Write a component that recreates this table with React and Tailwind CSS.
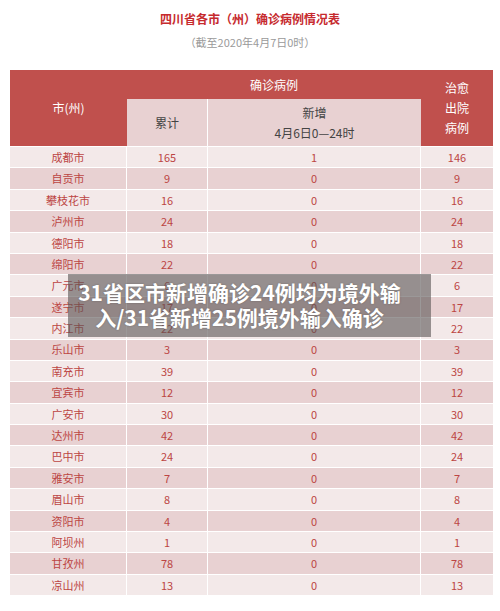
import React from 'react';

const rows = [
  ['成都市', 165, 1, 146],
  ['自贡市', 9, 0, 9],
  ['攀枝花市', 16, 0, 16],
  ['泸州市', 24, 0, 24],
  ['德阳市', 18, 0, 18],
  ['绵阳市', 22, 0, 22],
  ['广元市', 6, 0, 6],
  ['遂宁市', 17, 0, 17],
  ['内江市', 22, 0, 22],
  ['乐山市', 3, 0, 3],
  ['南充市', 39, 0, 39],
  ['宜宾市', 12, 0, 12],
  ['广安市', 30, 0, 30],
  ['达州市', 42, 0, 42],
  ['巴中市', 24, 0, 24],
  ['雅安市', 7, 0, 7],
  ['眉山市', 8, 0, 8],
  ['资阳市', 4, 0, 4],
  ['阿坝州', 1, 0, 1],
  ['甘孜州', 78, 0, 78],
  ['凉山州', 13, 0, 13],
];

const font = "font-['Noto_Sans_CJK_SC','Noto_Sans',sans-serif]";

export default function App() {
  return (
    <div className={`relative w-[500px] h-[611px] overflow-hidden bg-white ${font}`}>
      {/* Title */}
      <div className="pt-[11px] text-center">
        <p className="text-[12px] leading-4 font-bold text-[#c62a2e]">四川省各市（州）确诊病例情况表</p>
        <p className="mt-[7px] text-[11px] leading-4 text-[#9a9a9a]">（截至2020年4月7日0时）</p>
      </div>

      {/* Table */}
      <div className="mt-[20px] ml-[10px] w-[483px]">
        <div className="grid grid-cols-[117px_81px_213px_72px] grid-rows-[29px_47px] bg-[#c0504d] text-[12px]">
          <div className="row-span-2 flex items-center justify-center text-white">市(州)</div>
          <div className="col-span-2 flex items-center justify-center text-white">确诊病例</div>
          <div className="row-span-2 flex flex-col items-center justify-center leading-[20px] text-white">
            <span>治愈</span>
            <span>出院</span>
            <span>病例</span>
          </div>
          <div className="flex items-center justify-center border-r border-white bg-[#e8d1d2] text-[#444]">累计</div>
          <div className="flex flex-col items-center justify-center leading-[20px] bg-[#e8d1d2] text-[#444]">
            <span>新增</span>
            <span>4月6日0—24时</span>
          </div>
        </div>
        {rows.map(([name, total, add, cured], i) => (
          <div
            key={name}
            className={`grid h-[21.4px] grid-cols-[117px_81px_213px_72px] border-t border-white text-[11px] text-[#bc4543] ${i % 2 === 0 ? 'bg-[#f3e9e9]' : 'bg-[#e8d1d2]'}`}
          >
            <div className="flex items-center justify-center border-r border-white">{name}</div>
            <div className="flex items-center justify-center border-r border-white">{total}</div>
            <div className="flex items-center justify-center border-r border-white">{add}</div>
            <div className="flex items-center justify-center">{cured}</div>
          </div>
        ))}
      </div>

      {/* Headline overlay */}
      <div className="absolute left-[68px] top-[274px] w-[363px] h-[63px] bg-[rgba(88,84,84,0.6)] pl-[10px] py-[6px]">
        <div className="w-[323px] text-center text-[21px] leading-[25px] font-bold text-white [text-shadow:0_0_2px_rgba(0,0,0,0.25)]">
          <span className="block whitespace-nowrap">31省区市新增确诊24例均为境外输</span>
          <span className="block whitespace-nowrap">入/31省新增25例境外输入确诊</span>
        </div>
      </div>
    </div>
  );
}
